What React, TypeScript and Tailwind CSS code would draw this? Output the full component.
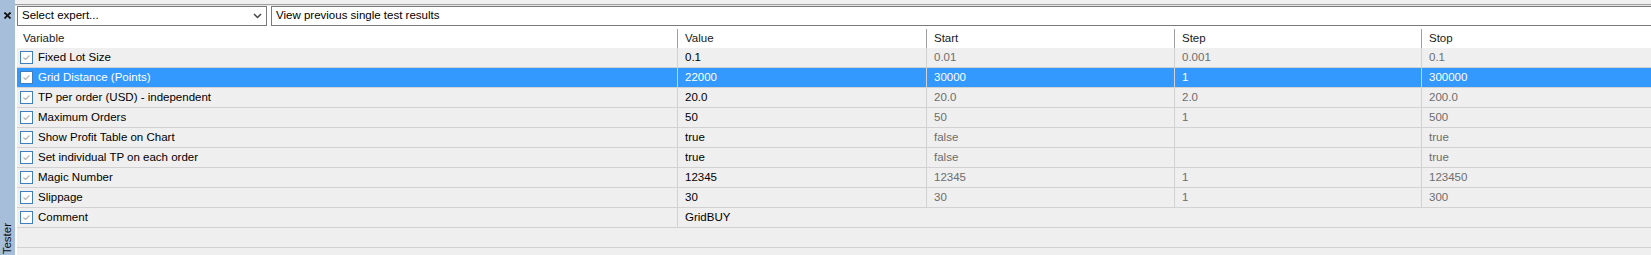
import React from "react";

type Row = {
  name: string;
  value: string;
  start?: string;
  step?: string;
  stop?: string;
  selected?: boolean;
  only2?: boolean;
};

const rows: Row[] = [
  { name: "Fixed Lot Size", value: "0.1", start: "0.01", step: "0.001", stop: "0.1" },
  { name: "Grid Distance (Points)", value: "22000", start: "30000", step: "1", stop: "300000", selected: true },
  { name: "TP per order (USD) - independent", value: "20.0", start: "20.0", step: "2.0", stop: "200.0" },
  { name: "Maximum Orders", value: "50", start: "50", step: "1", stop: "500" },
  { name: "Show Profit Table on Chart", value: "true", start: "false", step: "", stop: "true" },
  { name: "Set individual TP on each order", value: "true", start: "false", step: "", stop: "true" },
  { name: "Magic Number", value: "12345", start: "12345", step: "1", stop: "123450" },
  { name: "Slippage", value: "30", start: "30", step: "1", stop: "300" },
  { name: "Comment", value: "GridBUY", only2: true },
];

function Check() {
  return (
    <div className="w-[13px] h-[13px] border border-[#3f7fc0] bg-white flex items-center justify-center shrink-0">
      <svg width="9" height="9" viewBox="0 0 9 9">
        <polyline points="1.5,4.5 3.5,6.5 7.5,2.5" fill="none" stroke="#b4b4b4" strokeWidth="1.2" />
      </svg>
    </div>
  );
}

export default function App() {
  return (
    <div className="w-[1651px] h-[255px] flex bg-[#f0f0f0] overflow-hidden font-['Liberation_Sans',Arial,sans-serif] text-[11.5px] leading-none text-black">
      {/* sidebar */}
      <div className="w-[15px] shrink-0 bg-[#a6bed9] flex flex-col items-center justify-between">
        <div className="pt-[12px]">
          <svg width="7" height="7" viewBox="0 0 7 7">
            <line x1="0.5" y1="0.5" x2="6.5" y2="6.5" stroke="#111" strokeWidth="1.8" />
            <line x1="6.5" y1="0.5" x2="0.5" y2="6.5" stroke="#111" strokeWidth="1.8" />
          </svg>
        </div>
        <div className="[writing-mode:vertical-rl] rotate-180 mb-[1px] text-[#111] text-[11.5px] leading-[13px]">Tester</div>
      </div>
      {/* main */}
      <div className="flex-1 flex flex-col pl-[2px] bg-white">
        <div className="h-[4px] bg-[#f0f0f0] -ml-[2px]" />
        <div className="h-[1px] bg-[#a0a0a0] -ml-[2px]" />
        <div className="h-[1px] bg-[#e6e6e6] -ml-[2px]" />
        {/* toolbar */}
        <div className="h-[20px] flex items-stretch bg-white">
          <div className="w-[250px] border border-[#7a7a7a] flex items-center justify-between pl-[4px] pr-[4px]">
            <span>Select expert...</span>
            <svg width="9" height="6" viewBox="0 0 9 6">
              <polyline points="1,1 4.5,4.5 8,1" fill="none" stroke="#444" strokeWidth="1.5" />
            </svg>
          </div>
          <div className="w-[4px]" />
          <div className="flex-1 border-l border-t border-b border-[#7a7a7a] flex items-center pl-[4px]">
            <span>View previous single test results</span>
          </div>
        </div>
        {/* header */}
        <div className="h-[22px] bg-white flex items-end">
          <div className="h-[19px] w-[660px] flex items-center pl-[6px] text-[#1a1a1a]">Variable</div>
          <div className="h-[19px] w-[249px] flex items-center pl-[7px] border-l border-[#a0a0a0] text-[#1a1a1a]">Value</div>
          <div className="h-[19px] w-[248px] flex items-center pl-[7px] border-l border-[#a0a0a0] text-[#1a1a1a]">Start</div>
          <div className="h-[19px] w-[247px] flex items-center pl-[7px] border-l border-[#a0a0a0] text-[#1a1a1a]">Step</div>
          <div className="h-[19px] flex-1 flex items-center pl-[7px] border-l border-[#a0a0a0] text-[#1a1a1a]">Stop</div>
        </div>
        {/* rows */}
        <div className="flex-1 bg-[#efefef] flex flex-col">
          {rows.map((r) => {
            const bg = r.selected ? "bg-[#3399ff] text-white" : "bg-[#efefef]";
            const sub = r.selected ? "text-white" : "text-[#6d6d6d]";
            const val = r.selected ? "text-white" : "text-black";
            return (
              <div key={r.name} className={`h-[20px] flex border-b border-[#d2d2d2] ${bg}`}>
                <div className="w-[660px] flex items-center pl-[3px] gap-[5px]">
                  <Check />
                  <span>{r.name}</span>
                </div>
                {r.only2 ? (
                  <div className={`flex-1 flex items-center pl-[7px] border-l border-[#d2d2d2] ${val}`}>{r.value}</div>
                ) : (
                  <>
                    <div className={`w-[249px] flex items-center pl-[7px] border-l border-[#d2d2d2] ${val}`}>{r.value}</div>
                    <div className={`w-[248px] flex items-center pl-[7px] border-l border-[#d2d2d2] ${sub}`}>{r.start}</div>
                    <div className={`w-[247px] flex items-center pl-[7px] border-l border-[#d2d2d2] ${sub}`}>{r.step}</div>
                    <div className={`flex-1 flex items-center pl-[7px] border-l border-[#d2d2d2] ${sub}`}>{r.stop}</div>
                  </>
                )}
              </div>
            );
          })}
          <div className="h-[20px] border-b border-[#d2d2d2]" />
        </div>
      </div>
    </div>
  );
}
